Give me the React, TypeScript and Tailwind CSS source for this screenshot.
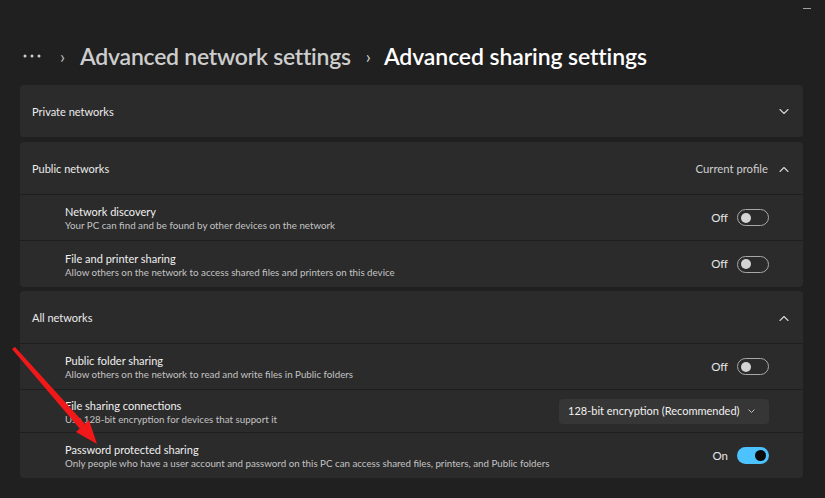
import React from 'react'

const FONT = { fontFamily: 'Lato, "Noto Sans", sans-serif' }

function Chevron({ up = false }: { up?: boolean }) {
  return (
    <svg width="10" height="6" viewBox="0 0 10 6" className="text-[#d6d6d6]">
      <path
        d={up ? 'M1 5.5 L5 1.5 L9 5.5' : 'M1 0.5 L5 4.5 L9 0.5'}
        fill="none"
        stroke="currentColor"
        strokeWidth="1.1"
        strokeLinecap="round"
        strokeLinejoin="round"
      />
    </svg>
  )
}

function Toggle({ on }: { on: boolean }) {
  return (
    <div className="flex items-center gap-[9px]">
      <span className="text-[11.5px] text-[#e6e6e6]">{on ? 'On' : 'Off'}</span>
      {on ? (
        <div className="flex h-[17px] w-[32px] items-center justify-end rounded-full bg-[#4cc2ff] pr-[3px]">
          <div className="h-[11px] w-[11px] rounded-full bg-[#0a0a0a]" />
        </div>
      ) : (
        <div className="flex h-[17px] w-[32px] items-center rounded-full border border-[#a8a8a8] pl-[3px]">
          <div className="h-[10px] w-[10px] rounded-full bg-[#d4d4d4]" />
        </div>
      )}
    </div>
  )
}

function Row(props: { title: string; desc: string; h: string; right: React.ReactNode }) {
  return (
    <div className={`flex items-center border-t border-[#1e1e1e] pl-[45px] pr-[34px] ${props.h}`}>
      <div className="flex flex-1 flex-col pt-[1px]">
        <span className="text-[11px] leading-[14px] text-[#f0f0f0]">{props.title}</span>
        <span className="text-[9.75px] leading-[12px] text-[#c4c4c4]">{props.desc}</span>
      </div>
      {props.right}
    </div>
  )
}

function Header(props: { title: string; extra?: string; up?: boolean }) {
  return (
    <div className="flex h-[52px] items-center pl-[12px] pr-[14px] pt-[2px]">
      <span className="flex-1 text-[11px] text-[#ececec]">{props.title}</span>
      {props.extra && <span className="mr-[11px] text-[11.3px] text-[#cfcfcf]">{props.extra}</span>}
      <Chevron up={props.up} />
    </div>
  )
}

export default function App() {
  return (
    <div className="relative h-[498px] w-[825px] overflow-hidden bg-[#202020]" style={FONT}>
      <div className="absolute right-[14px] top-[8px] h-[1px] w-[8px] bg-[#a0a0a0]" />

      <div className="mt-[38px] mb-[11px] flex h-[36px] items-center pl-[23px]">
        <svg width="20" height="4" viewBox="0 0 20 4">
          <circle cx="2" cy="2" r="1.5" fill="#cfcfcf" />
          <circle cx="9" cy="2" r="1.5" fill="#cfcfcf" />
          <circle cx="16" cy="2" r="1.5" fill="#cfcfcf" />
        </svg>
        <span className="ml-[17px] mr-[15px] text-[18px] text-[#bdbdbd]">›</span>
        <span className="text-[23px] font-semibold tracking-[-0.25px] text-[#cdcdcd]">Advanced network settings</span>
        <span className="ml-[15px] mr-[13px] text-[18px] text-[#d0d0d0]">›</span>
        <span className="text-[23px] font-semibold tracking-[-0.1px] text-white">Advanced sharing settings</span>
      </div>

      <div className="flex flex-col pl-[20px] pr-[22px]">
        <div className="rounded-[4px] bg-[#2b2b2b]">
          <Header title="Private networks" />
        </div>

        <div className="mt-[5px] rounded-[4px] bg-[#2b2b2b]">
          <Header title="Public networks" extra="Current profile" up />
          <Row
            title="Network discovery"
            desc="Your PC can find and be found by other devices on the network"
            h="h-[46px]"
            right={<Toggle on={false} />}
          />
          <Row
            title="File and printer sharing"
            desc="Allow others on the network to access shared files and printers on this device"
            h="h-[47px]"
            right={<Toggle on={false} />}
          />
        </div>

        <div className="mt-[4px] rounded-[4px] bg-[#2b2b2b]">
          <Header title="All networks" up />
          <Row
            title="Public folder sharing"
            desc="Allow others on the network to read and write files in Public folders"
            h="h-[46px]"
            right={<Toggle on={false} />}
          />
          <Row
            title="File sharing connections"
            desc="Use 128-bit encryption for devices that support it"
            h="h-[43px]"
            right={
              <div className="flex h-[25px] w-[210px] items-center justify-between rounded-[4px] bg-[#363636] pl-[9px] pr-[14px]">
                <span className="whitespace-nowrap text-[11px] text-[#f0f0f0]">128-bit encryption (Recommended)</span>
                <svg width="7" height="4" viewBox="0 0 7 4">
                  <path d="M0.5 0.5 L3.5 3.5 L6.5 0.5" fill="none" stroke="#bdbdbd" strokeWidth="1" />
                </svg>
              </div>
            }
          />
          <Row
            title="Password protected sharing"
            desc="Only people who have a user account and password on this PC can access shared files, printers, and Public folders"
            h="h-[46px]"
            right={<Toggle on />}
          />
        </div>
      </div>

      <svg className="pointer-events-none absolute left-0 top-0" width="825" height="498">
        <polygon points="12,349 15,347 85,424 80,429" fill="#f01818" />
        <polygon points="97,444 76,432 89,420" fill="#f01818" />
      </svg>
    </div>
  )
}
